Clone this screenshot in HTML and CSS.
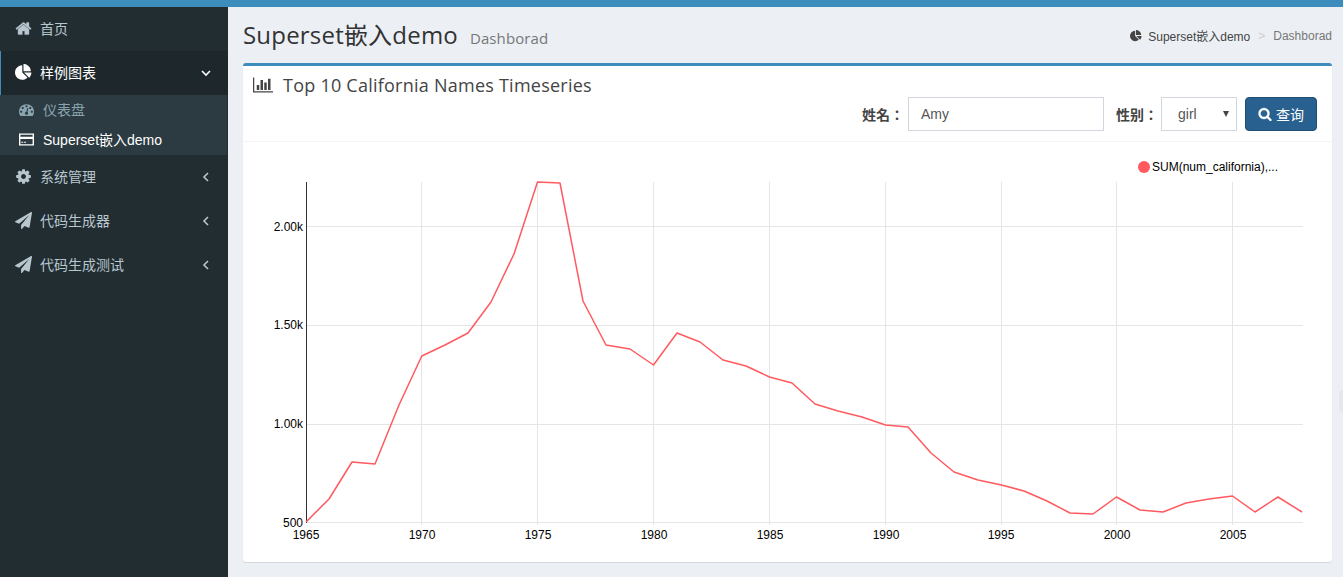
FILE: index.html
```html
<!DOCTYPE html>
<html lang="zh">
<head>
<meta charset="utf-8">
<title>Superset嵌入demo</title>
<link rel="stylesheet" href="styles.css">
</head>
<body>
<div class="topbar"></div>
<div class="layout">
  <aside class="sidebar">
    <a class="nav-item">
      <svg class="nav-icon nav-icon-solid" viewBox="0 0 1792 1792"><path d="M1472 992v480q0 26-19 45t-45 19h-384v-384h-256v384h-384q-26 0-45-19t-19-45v-480q0-1 .5-3t.5-3l575-474 575 474q1 2 1 6zm223-69l-62 74q-8 9-21 11h-3q-13 0-21-7l-692-577-692 577q-12 8-24 7-13-2-21-11l-62-74q-8-10-7-23.5t11-21.5l719-599q32-26 76-26t76 26l244 204v-195q0-14 9-23t23-9h192q14 0 23 9t9 23v408l219 182q10 8 11 21.5t-7 23.5z"/></svg>
      <span class="nav-label">首页</span>
    </a>
    <a class="nav-item active">
      <svg class="nav-icon" viewBox="0 0 1792 1792"><path d="M768 890l546 546q-106 108-247.5 168t-298.5 60q-209 0-385.5-103t-279.5-279.5-103-385.5 103-385.5 279.5-279.5 385.5-103v762zm187 2h773q0 157-60 298.5t-168 247.5zm709-128h-768v-768q209 0 385.5 103t279.5 279.5 103 385.5z"/></svg>
      <span class="nav-label">样例图表</span>
      <svg class="chev" viewBox="0 0 10 10"><polyline points="1,3 5,7 9,3"/></svg>
    </a>
    <div class="submenu">
      <a class="sub-item">
        <svg class="sub-icon" viewBox="0 0 1792 1792"><path d="M384 1152q0-53-37.5-90.5t-90.5-37.5-90.5 37.5-37.5 90.5 37.5 90.5 90.5 37.5 90.5-37.5 37.5-90.5zm192-448q0-53-37.5-90.5t-90.5-37.5-90.5 37.5-37.5 90.5 37.5 90.5 90.5 37.5 90.5-37.5 37.5-90.5zm428 481l101-382q6-26-7.5-48.5t-38.5-29.5-48 6.5-30 39.5l-101 382q-60 5-107 43.5t-63 98.5q-20 77 20 146t117 89 146-20 89-117q16-60-6-117t-72-91zm660-33q0-53-37.5-90.5t-90.5-37.5-90.5 37.5-37.5 90.5 37.5 90.5 90.5 37.5 90.5-37.5 37.5-90.5zm-640-640q0-53-37.5-90.5t-90.5-37.5-90.5 37.5-37.5 90.5 37.5 90.5 90.5 37.5 90.5-37.5 37.5-90.5zm448 192q0-53-37.5-90.5t-90.5-37.5-90.5 37.5-37.5 90.5 37.5 90.5 90.5 37.5 90.5-37.5 37.5-90.5zm320 448q0 261-141 483-19 29-54 29h-1402q-35 0-54-29-141-221-141-483 0-182 71-348t191-286 286-191 348-71 348 71 286 191 191 286 71 348z"/></svg>
        <span class="sub-label">仪表盘</span>
      </a>
      <a class="sub-item current">
        <svg class="sub-icon" viewBox="0 0 16 13"><path fill-rule="evenodd" d="M0 0h16v13H0zM1.500 1.500v2h13v-2zM1.500 6v5.500h13V6zM2.500 9h2v1h-2zM5.500 9h2v1h-2z"/></svg>
        <span class="sub-label">Superset嵌入demo</span>
      </a>
    </div>
    <a class="nav-item">
      <svg class="nav-icon" viewBox="0 0 1792 1792"><path d="M1152 896q0-106-75-181t-181-75-181 75-75 181 75 181 181 75 181-75 75-181zm512-109v222q0 12-8 23t-20 13l-185 28q-19 54-39 91 35 50 107 138 10 12 10 25t-9 23q-27 37-99 108t-94 71q-12 0-26-9l-138-108q-44 23-91 38-16 136-29 186-7 28-36 28h-222q-14 0-24.500-8.500t-11.500-21.500l-28-184q-49-16-90-37l-141 107q-10 9-25 9-14 0-25-11-126-114-165-168-7-10-7-23 0-12 8-23 15-21 51-66.500t54-70.500q-27-50-41-99l-183-27q-13-2-21-12.500t-8-23.500v-222q0-12 8-23t19-13l186-28q14-46 39-92-40-57-107-138-10-12-10-24 0-10 9-23 26-36 98.500-107.500t94.500-71.500q13 0 26 10l138 107q44-23 91-38 16-136 29-186 7-28 36-28h222q14 0 24.500 8.500t11.500 21.500l28 184q49 16 90 37l142-107q9-9 24-9 13 0 25 10 129 119 165 170 7 8 7 22 0 12-8 23-15 21-51 66.500t-54 70.500q26 50 41 98l183 28q13 2 21 12.500t8 23.500z"/></svg>
      <span class="nav-label">系统管理</span>
      <svg class="chev" viewBox="0 0 10 10"><polyline points="7,1 3,5 7,9"/></svg>
    </a>
    <a class="nav-item">
      <svg class="nav-icon" viewBox="0 0 1792 1792"><path d="M1764 11q33 24 27 64l-256 1536q-5 29-32 45-14 8-31 8-11 0-24-5l-453-185-242 295q-18 23-49 23-13 0-22-4-19-7-30.500-23.500t-11.500-36.500v-349l864-1059-1069 925-395-162q-37-14-40-55-2-40 32-59l1664-960q15-9 32-9 20 0 36 11z"/></svg>
      <span class="nav-label">代码生成器</span>
      <svg class="chev" viewBox="0 0 10 10"><polyline points="7,1 3,5 7,9"/></svg>
    </a>
    <a class="nav-item">
      <svg class="nav-icon" viewBox="0 0 1792 1792"><path d="M1764 11q33 24 27 64l-256 1536q-5 29-32 45-14 8-31 8-11 0-24-5l-453-185-242 295q-18 23-49 23-13 0-22-4-19-7-30.500-23.500t-11.500-36.500v-349l864-1059-1069 925-395-162q-37-14-40-55-2-40 32-59l1664-960q15-9 32-9 20 0 36 11z"/></svg>
      <span class="nav-label">代码生成测试</span>
      <svg class="chev" viewBox="0 0 10 10"><polyline points="7,1 3,5 7,9"/></svg>
    </a>
  </aside>

  <main class="content">
    <header class="page-head">
      <h1 class="page-title">Superset嵌入demo<small class="page-sub">Dashborad</small></h1>
      <nav class="crumbs">
        <svg class="crumb-icon" viewBox="0 0 1792 1792"><path d="M768 890l546 546q-106 108-247.500 168t-298.500 60q-209 0-385.500-103t-279.500-279.500-103-385.500 103-385.500 279.500-279.500 385.500-103v762zm187 2h773q0 157-60 298.500t-168 247.500zm709-128h-768v-768q209 0 385.500 103t279.500 279.500 103 385.500z"/></svg>
        <span class="crumb-link">Superset嵌入demo</span>
        <span class="crumb-sep">&gt;</span>
        <span class="crumb-now">Dashborad</span>
      </nav>
    </header>

    <section class="box">
      <div class="box-head">
        <h3 class="box-title">
          <svg class="title-icon" viewBox="0 0 2048 1792"><path d="M640 896v512h-256v-512h256zm384-512v1024h-256v-1024h256zm1024 1152v128h-2048v-1536h128v1408h1920zm-640-896v768h-256v-768h256zm384-384v1152h-256v-1152h256z"/></svg>
          <span>Top 10 California Names Timeseries</span>
        </h3>
        <form class="query">
          <label class="q-label" lang="zh-Hant">姓名：</label>
          <input class="q-input" type="text" value="Amy">
          <label class="q-label q-label-gap" lang="zh-Hant">性别：</label>
          <span class="q-select-wrap">
            <select class="q-select"><option>girl</option></select>
          </span>
          <button class="q-btn" type="button">
            <svg class="btn-icon" viewBox="0 0 1792 1792"><path d="M1216 832q0-185-131.500-316.500t-316.500-131.500-316.500 131.500-131.500 316.500 131.500 316.500 316.500 131.500 316.500-131.500 131.500-316.500zm512 832q0 52-38 90t-90 38q-54 0-90-38l-343-342q-179 124-399 124-143 0-273.500-55.500t-225-150-150-225-55.500-273.500 55.500-273.500 150-225 225-150 273.500-55.500 273.500 55.500 225 150 150 225 55.500 273.500q0 220-124 399l343 343q37 37 37 90z"/></svg>
            <span>查询</span>
          </button>
        </form>
      </div>
      <div class="box-body">
        <svg class="chart" viewBox="243 142 1089 420" width="1089" height="420">
          <g class="grid">
            <line x1="306" x2="1303" y1="226.500" y2="226.500"/>
            <line x1="306" x2="1303" y1="325.500" y2="325.500"/>
            <line x1="306" x2="1303" y1="424.500" y2="424.500"/>
            <line x1="306" x2="1303" y1="522.500" y2="522.500"/>
            <line x1="421.500" x2="421.500" y1="182" y2="525"/>
            <line x1="537.500" x2="537.500" y1="182" y2="525"/>
            <line x1="653.500" x2="653.500" y1="182" y2="525"/>
            <line x1="769.500" x2="769.500" y1="182" y2="525"/>
            <line x1="885.500" x2="885.500" y1="182" y2="525"/>
            <line x1="1001.500" x2="1001.500" y1="182" y2="525"/>
            <line x1="1116.500" x2="1116.500" y1="182" y2="525"/>
            <line x1="1232.500" x2="1232.500" y1="182" y2="525"/>
          </g>
          <line class="y-axis" x1="306.500" x2="306.500" y1="182" y2="523"/>
          <polyline class="series" points="306,522 329,499 352,462 375,464 399,405 421.800,356 445,345 468,333 491,302 514,254 537.500,182 560,183 583,301 606,345 630,349 653.500,365 677,333 700,342 723,360 746,366 769.500,377 792,383 815,404 838,411 862,417 885.500,425 908,427 931,453 954,472 978,480 1001.500,485 1024,491 1047,501 1070,513 1093,514 1116.500,497 1140,510 1163,512 1186,503 1209,499 1232.500,496 1255,512 1278,497 1302,512"/>
          <g class="ylabels">
            <text x="303" y="231">2.00k</text>
            <text x="303" y="329">1.50k</text>
            <text x="303" y="428">1.00k</text>
            <text x="303" y="527">500</text>
          </g>
          <g class="xlabels">
            <text x="306" y="539">1965</text>
            <text x="422" y="539">1970</text>
            <text x="538" y="539">1975</text>
            <text x="654" y="539">1980</text>
            <text x="770" y="539">1985</text>
            <text x="886" y="539">1990</text>
            <text x="1001" y="539">1995</text>
            <text x="1117" y="539">2000</text>
            <text x="1233" y="539">2005</text>
          </g>
          <circle class="legend-dot" cx="1144" cy="167" r="6"/>
          <text class="legend-text" x="1152" y="171">SUM(num_california),...</text>
        </svg>
      </div>
    </section>
  </main>
</div>
<div class="edge-handle"></div>
</body>
</html>
```
FILE: styles.css
```css
* { box-sizing: border-box; }
html, body { margin: 0; height: 100%; overflow: hidden; }
body {
  background: #ecf0f5;
  font-family: "Liberation Sans", "Noto Sans CJK SC", sans-serif;
  font-size: 14px;
  color: #333;
}
.topbar { height: 7px; background: #3c8dbc; }
.layout { display: flex; height: 570px; }

/* sidebar */
.sidebar { width: 228px; flex: none; background: #222d32; }
.nav-item {
  display: flex;
  align-items: center;
  height: 44px;
  padding-left: 15px;
  padding-right: 17px;
  color: #b8c7ce;
  fill: #b8c7ce;
  stroke: none;
}
.nav-item.active {
  background: #1e282c;
  color: #fff;
  fill: #fff;
  box-shadow: inset 1px 0 0 #3c8dbc;
}
.nav-icon { width: 17px; height: 17px; flex: none; margin: -2px 8px 0 0; }
.nav-icon-solid { stroke: #b8c7ce; stroke-width: 40; }
.nav-label { flex: 1; margin-top: -2px; }
.chev { width: 10px; height: 10px; flex: none; fill: none; stroke: currentColor; stroke-width: 1.600; }
.submenu { background: #2c3b41; padding: 0; margin-right: 1px; height: 60px; }
.sub-item {
  display: flex;
  align-items: center;
  height: 30px;
  padding-left: 19px;
  color: #8aa4af;
  fill: #8aa4af;
}
.sub-item.current { color: #fff; fill: #fff; }
.sub-icon { width: 15px; height: 15px; flex: none; margin: -2px 9px 0 0; }
.sub-label { margin-top: -2px; }

/* content */
.content { flex: 1; min-width: 0; padding: 0 11px 0 15px; }
.page-head { display: flex; justify-content: space-between; align-items: center; height: 56px; }
.page-title {
  margin: -4px 0 0;
  font-family: "Open Sans", "Noto Sans CJK SC", sans-serif;
  font-size: 24px;
  font-weight: 400;
  letter-spacing: .2px;
  color: #333;
}
.page-sub { font-size: 15px; color: #777; font-weight: 400; margin-left: 12px; letter-spacing: .1px; }
.crumbs { display: flex; align-items: center; font-size: 12px; color: #444; padding-top: 1px; }
.crumb-icon { width: 12px; height: 12px; margin-right: 6px; fill: #444; }
.crumb-sep { color: #ccc; margin: 0 8px; }
.crumb-now { color: #777; }

.box {
  height: 499px;
  background: #fff;
  border-top: 3px solid #3c8dbc;
  border-radius: 3px;
  box-shadow: 0 1px 1px rgba(0, 0, 0, .1);
}
.box-head { height: 76px; border-bottom: 1px solid #f4f4f4; padding: 7px 15px 0 10px; }
.box-title {
  display: flex;
  align-items: center;
  margin: 0;
  font-family: "Open Sans", "Noto Sans CJK SC", sans-serif;
  font-size: 18px;
  font-weight: 400;
  letter-spacing: .24px;
  color: #444;
  height: 24px;
}
.title-icon { width: 20px; height: 18px; margin-right: 10px; fill: #444; }
.query { display: flex; justify-content: flex-end; align-items: center; }
.q-label { font-family: "Liberation Sans", "Noto Sans CJK TC", sans-serif; font-weight: 700; color: #444; font-size: 14px; margin-right: 4px; }
.q-label-gap { margin-left: 12px; margin-right: 3px; }
.q-input {
  width: 196px;
  height: 34px;
  border: 1px solid #d2d6de;
  padding: 0 12px;
  font: 14px "Liberation Sans", sans-serif;
  color: #555;
  background: #fff;
  border-radius: 0;
  outline: none;
}
.q-select-wrap { position: relative; display: block; }
.q-select-wrap::after {
  content: "";
  position: absolute;
  right: 8px;
  top: 14px;
  border-left: 3.500px solid transparent;
  border-right: 3.500px solid transparent;
  border-top: 6px solid #444;
}
.q-select {
  display: block;
  width: 76px;
  height: 34px;
  border: 1px solid #d2d6de;
  padding: 0 16px;
  font: 14px "Liberation Sans", sans-serif;
  color: #555;
  background: #fff;
  appearance: none;
  border-radius: 0;
  outline: none;
}
.q-btn {
  display: flex;
  align-items: center;
  justify-content: center;
  width: 72px;
  height: 34px;
  margin-left: 8px;
  background: #286090;
  border: 1px solid #204d74;
  border-radius: 4px;
  color: #fff;
  fill: #fff;
  font: 14px "Liberation Sans", "Noto Sans CJK SC", sans-serif;
  padding: 0;
}
.btn-icon { width: 14px; height: 14px; margin-right: 4px; stroke: #fff; stroke-width: 40; }

/* chart */
.box-body { height: 420px; }
.chart { display: block; font: 12px "Liberation Sans", sans-serif; fill: #000; }
.grid line { stroke: #e5e5e5; stroke-width: 1; }
.y-axis { stroke: #333; stroke-width: 1; }
.series { fill: none; stroke: #ff5a5f; stroke-width: 1.500; stroke-linejoin: round; }
.ylabels text { text-anchor: end; }
.xlabels text { text-anchor: middle; }
.legend-dot { fill: #ff5a5f; }

.edge-handle {
  position: absolute;
  right: -4px;
  top: 390px;
  width: 8px;
  height: 22px;
  border-radius: 4px;
  background: #e4e7ec;
}
```
